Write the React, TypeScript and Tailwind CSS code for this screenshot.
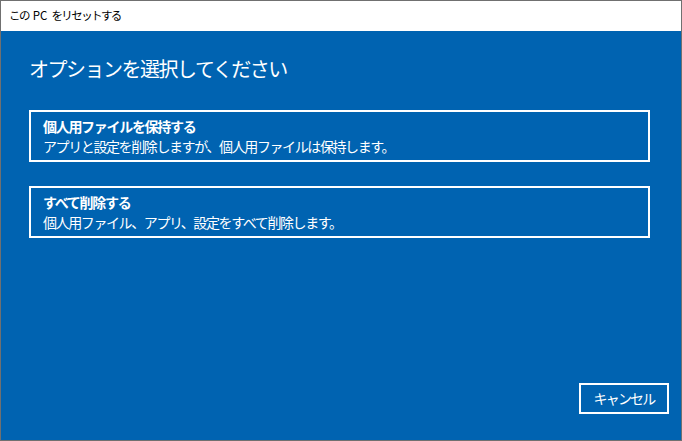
const jp = "font-['Noto_Sans_CJK_JP','Noto_Sans',sans-serif]";

function Option({ title, desc }: { title: string; desc: string }) {
  return (
    <button className="w-[621px] h-[52px] border-2 border-white pl-[12px] py-[4px] text-left text-white flex flex-col">
      <span className="text-[14px] leading-[20px] font-bold tracking-[-1.3px]">{title}</span>
      <span className="text-[14px] leading-[20px] tracking-[-1.4px]">{desc}</span>
    </button>
  );
}

export default function App() {
  return (
    <div className={`w-[682px] h-[441px] border border-[#707070] flex flex-col ${jp}`}>
      {/* title bar */}
      <div className="h-[30px] bg-white flex items-center gap-[4px] pl-[8px] text-[11.5px] text-black tracking-[-1.6px]">
        <span>この</span>
        <span className="tracking-[0px]">PC</span>
        <span>をリセットする</span>
      </div>

      <div className="flex-1 bg-[#0063b1] flex flex-col">
        <div className="px-[28px] pt-[24px] flex flex-col">
          <h1 className="text-white text-[20px] leading-[28px] font-normal tracking-[-1.5px]">
            オプションを選択してください
          </h1>
          <div className="mt-[27px] flex flex-col gap-[24px]">
            <Option
              title="個人用ファイルを保持する"
              desc="アプリと設定を削除しますが、個人用ファイルは保持します。"
            />
            <Option
              title="すべて削除する"
              desc="個人用ファイル、アプリ、設定をすべて削除します。"
            />
          </div>
        </div>

        <div className="mt-auto flex justify-end pr-[12px] pb-[26px]">
          <button className="w-[90px] h-[31px] border-2 border-white text-white text-[14px] tracking-[-1.8px] flex items-center justify-center">
            キャンセル
          </button>
        </div>
      </div>
    </div>
  );
}
